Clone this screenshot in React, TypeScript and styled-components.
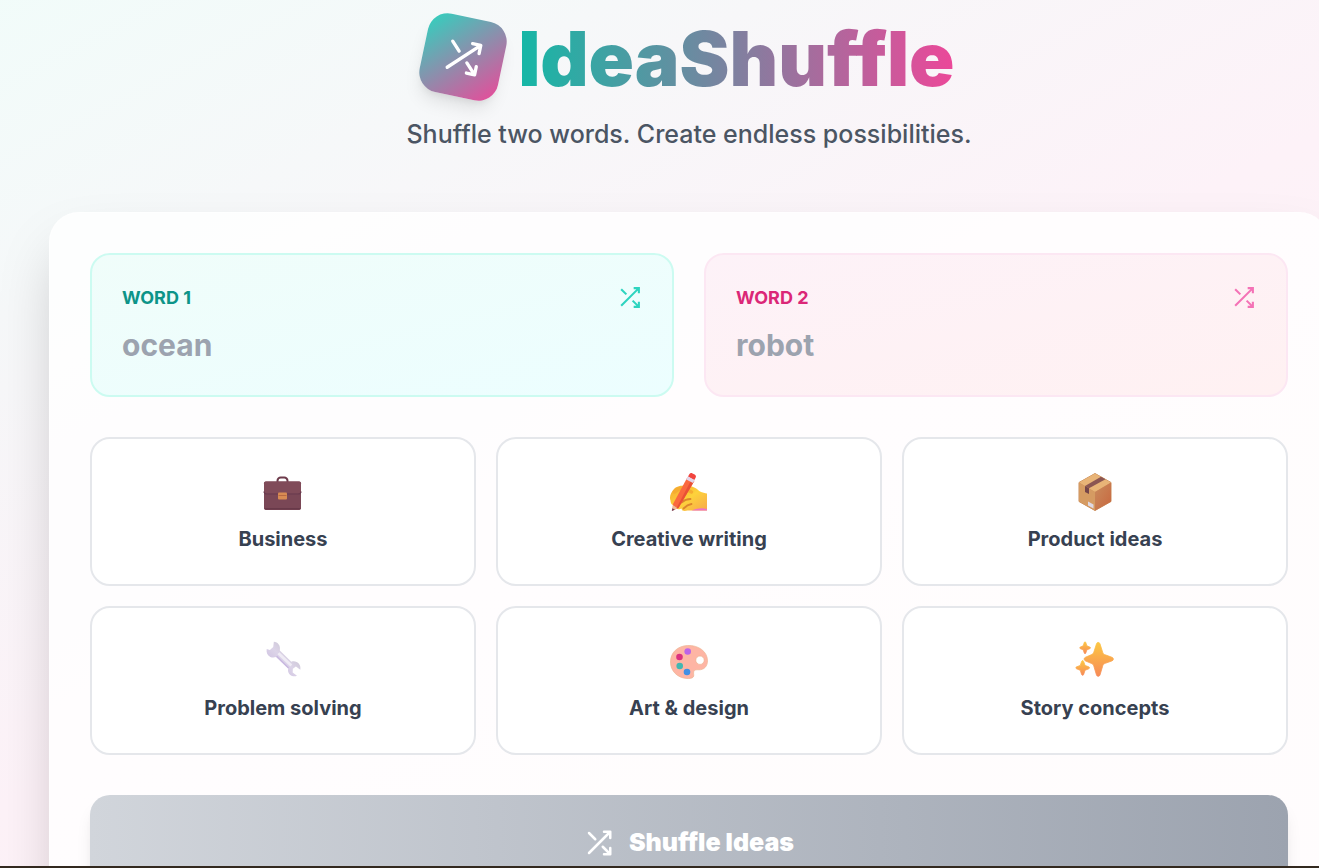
import React from "react";
import styled, { createGlobalStyle } from "styled-components";

const GlobalStyle = createGlobalStyle`
  *, *::before, *::after { box-sizing: border-box; }
  html { overflow-x: hidden; scrollbar-width: none; }
  body {
    margin: 0;
    font-family: Inter, "Liberation Sans", sans-serif;
    color: #374151;
  }
  button, input { font-family: inherit; }
`;

const Page = styled.div`
  width: max-content;
  min-width: 100%;
  min-height: 100vh;
  padding: 17px 49px 48px;
  background: linear-gradient(153deg, #f0fdfa -6%, #fdf2f8 48%, #fff1f2 100%);
`;

const Container = styled.main`
  width: 1280px;
  margin: 0 auto;
`;

const Header = styled.header`
  display: flex;
  flex-direction: column;
  align-items: center;
  gap: 20px;
  margin-bottom: 60px;
`;

const Brand = styled.div`
  display: flex;
  align-items: center;
  gap: 15px;
`;

const LogoTile = styled.div`
  display: grid;
  place-items: center;
  width: 80px;
  height: 80px;
  border-radius: 20px;
  color: #fff;
  background: linear-gradient(to bottom right, #2dd4bf, #ec4899);
  box-shadow: 0 12px 18px -4px rgba(0, 0, 0, 0.1), 0 5px 8px -5px rgba(0, 0, 0, 0.1);
  transform: rotate(12deg);
`;

const Title = styled.h1`
  margin: 0;
  padding-top: 4px;
  font-size: 75px;
  line-height: 76px;
  font-weight: 900;
  color: transparent;
  background: linear-gradient(to right, #14b8a6, #ec4899);
  background-clip: text;
  -webkit-background-clip: text;
`;

const Tagline = styled.p`
  margin: 0;
  font-size: 25px;
  line-height: 35px;
  font-weight: 500;
  color: #4b5563;
`;

const Panel = styled.section`
  display: flex;
  flex-direction: column;
  gap: 40px;
  padding: 40px;
  border: 1px solid rgba(255, 255, 255, 0.5);
  border-radius: 30px;
  background: rgba(255, 255, 255, 0.8);
  box-shadow: 0 31px 62px -15px rgba(0, 0, 0, 0.25);
`;

const Words = styled.div`
  display: grid;
  grid-template-columns: 1fr 1fr;
  gap: 30px;
`;

type Tone = "teal" | "pink";

const tones = {
  teal: { from: "#f0fdfa", to: "#ecfeff", border: "#ccfbf1", label: "#0d9488", icon: "#2dd4bf" },
  pink: { from: "#fdf2f8", to: "#fff1f2", border: "#fce7f3", label: "#db2777", icon: "#f472b6" },
};

const WordCard = styled.div<{ $tone: Tone }>`
  display: flex;
  flex-direction: column;
  gap: 15px;
  padding: 30px;
  border: 2px solid ${(p) => tones[p.$tone].border};
  border-radius: 20px;
  background: linear-gradient(to bottom right, ${(p) => tones[p.$tone].from}, ${(p) => tones[p.$tone].to});
`;

const WordHead = styled.div`
  display: flex;
  align-items: center;
  justify-content: space-between;
  height: 25px;
`;

const WordLabel = styled.label<{ $tone: Tone }>`
  font-size: 18px;
  line-height: 25px;
  font-weight: 700;
  color: ${(p) => tones[p.$tone].label};
`;

const IconButton = styled.button<{ $tone: Tone }>`
  display: flex;
  padding: 0;
  border: 0;
  background: none;
  color: ${(p) => tones[p.$tone].icon};
  cursor: pointer;
`;

const WordInput = styled.input`
  width: 100%;
  height: 40px;
  padding: 0;
  border: 0;
  outline: 0;
  background: transparent;
  font-size: 30px;
  line-height: 40px;
  font-weight: 700;
  color: #1f2937;

  &::placeholder { color: #9ca3af; opacity: 1; }
`;

const Topics = styled.div`
  display: grid;
  grid-template-columns: repeat(3, 1fr);
  gap: 20px;
`;

const Topic = styled.button`
  display: flex;
  flex-direction: column;
  align-items: center;
  gap: 10px;
  padding: 30px;
  border: 2px solid #e5e7eb;
  border-radius: 20px;
  background: #fff;
  color: #374151;
  font-size: 20px;
  line-height: 30px;
  font-weight: 700;
  cursor: pointer;
`;

const Picture = styled.svg`
  display: block;
  width: 45px;
  height: 45px;
`;

const ShuffleButton = styled.button`
  display: flex;
  align-items: center;
  justify-content: center;
  gap: 15px;
  padding: 30px;
  border: 0;
  border-radius: 20px;
  color: #fff;
  background: linear-gradient(to right, #d1d5db, #9ca3af);
  box-shadow: 0 12px 18px -4px rgba(0, 0, 0, 0.1), 0 5px 8px -5px rgba(0, 0, 0, 0.1);
  font-size: 25px;
  line-height: 35px;
  font-weight: 900;
`;

const BottomEdge = styled.div`
  position: fixed;
  inset: auto 0 0 0;
  height: 2px;
  background: #33291f;
`;

function ShuffleIcon({ size, stroke = 2, round = false }: { size: number; stroke?: number; round?: boolean }) {
  return (
    <svg
      width={size}
      height={size}
      viewBox="0 0 24 24"
      fill="none"
      stroke="currentColor"
      strokeWidth={stroke}
      strokeLinecap={round ? "round" : "butt"}
      strokeLinejoin={round ? "round" : "miter"}
      aria-hidden="true"
    >
      <path d="M16 3h5v5M4 20 21 3M21 16v5h-5M15 15l6 6M4 4l5 5" />
    </svg>
  );
}

function Briefcase() {
  return (
    <Picture viewBox="1 0 45 45" aria-hidden="true">
      <path d="M17.500 14v-2.300a3.200 3.200 0 0 1 3.200-3.200h3.600a3.200 3.200 0 0 1 3.200 3.200V14" fill="none" stroke="#6d3b4b" strokeWidth="2" />
      <rect x="4" y="12.500" width="37" height="28.500" rx="1.800" fill="#7a4756" />
      <path d="M4 14.300A1.800 1.800 0 0 1 5.800 12.500h33.400a1.800 1.800 0 0 1 1.800 1.800V22q0 2.500-2.500 2.500h-32Q4 24.500 4 22z" fill="#804b59" />
      <path d="M4 22.500q0 2.500 3 2.500h31q3 0 3-2.500" fill="none" stroke="#693a4e" strokeWidth="1.200" />
      <path d="M5 39.800h35" stroke="#683949" strokeWidth="1.600" />
      <rect x="18" y="23.500" width="9" height="7" rx="1" fill="#d88b53" />
      <path d="M18.500 26.500h8" stroke="#b96a42" strokeWidth="1" />
    </Picture>
  );
}

function WritingHand() {
  return (
    <Picture viewBox="1.500 -0.500 45 45" aria-hidden="true">
      <defs>
        <linearGradient id="hand" x1="0" y1="0" x2="1" y2="1">
          <stop offset="0" stopColor="#f5a52f" />
          <stop offset=".5" stopColor="#fdd23b" />
          <stop offset="1" stopColor="#f7a84b" />
        </linearGradient>
      </defs>
      <path d="M5 31c-1.500-4 .5-8 3.500-11.500 2.500-2.800 7-3.500 11.500-3.500 7-.2 11 3 14.500 6 2.500 1.300 5 1.700 7 2v17H22c-3 1-6 .5-6-2-3 2-6 0-5-3-3.500 1-6-1.500-6-5z" fill="url(#hand)" />
      <path d="M26 41q8-3.500 15.500-1.500V41z" fill="#ed72c4" />
      <path d="M16 33q4-3.500 9-3.500M18 39q4-4 8-4.500" fill="none" stroke="#dc852d" strokeWidth="1.800" strokeLinecap="round" />
      <path d="M9 22.500q5-5 11-3l6 3" fill="none" stroke="#f6ac30" strokeWidth="3.500" strokeLinecap="round" />
      <path d="m21.800 8 7 3.500L13 38.500 7 41l.5-6.500z" fill="#fa693e" />
      <path d="m26 10 2.800 1.500L13 38.500l-2.500 1z" fill="#e95036" />
      <path d="m22.500 7 1.300-2.200c.7-1.200 2-1.500 3.200-.9l2.200 1.100c1.300.7 1.600 2 .9 3.200l-1.400 2.600z" fill="#f1453f" />
      <path d="m20.700 10 1.600-3 6.900 3.500-1.700 3z" fill="#e2d4e8" />
      <path d="M7.300 35.500 12 38.800 6.600 41.200z" fill="#edbd9b" />
      <path d="m6.900 38.800 2.500 1.500-3.100 1.300z" fill="#6d3a55" />
    </Picture>
  );
}

function Parcel() {
  return (
    <Picture viewBox="0.500 -0.500 45 45" aria-hidden="true">
      <defs>
        <linearGradient id="parcelSide" x1="0" y1="0" x2="1" y2="1">
          <stop offset="0" stopColor="#c98c5d" />
          <stop offset="1" stopColor="#c8673f" />
        </linearGradient>
      </defs>
      <path d="m22.500 4 16 9v19l-16 9-16-9V13z" fill="#cc925d" stroke="#c98b59" strokeLinejoin="round" />
      <path d="m22.500 4 16 9-16 9.500-16-9.500z" fill="#e8b477" />
      <path d="M38.500 13v19l-16 9V22.500z" fill="url(#parcelSide)" />
      <path d="M6.500 13v19l16 9V22.500z" fill="#d59b62" />
      <path d="M12.500 16.500 28.500 7.200 33 9.700l-16.500 9.100z" fill="#8b5652" />
      <path d="m12.500 16.500 4 2.300v5.700l-4-2z" fill="#754549" />
      <path d="m15.500 32 5.500 3v4l-5.500-3z" fill="#ded9e4" />
    </Picture>
  );
}

function Wrench() {
  return (
    <Picture viewBox="-0.500 0.500 49 49" aria-hidden="true">
      <defs>
        <linearGradient id="steel" x1="0" y1="1" x2="1" y2="0">
          <stop offset="0" stopColor="#c5b4dc" />
          <stop offset=".5" stopColor="#dcd4e8" />
          <stop offset="1" stopColor="#bdbac3" />
        </linearGradient>
      </defs>
      <path
        d="m13.500 4.700-.7 5.600-3.600 3.400-3.500-1.200c-.6 3.700.7 7 3.900 8.600 2.200 1 4.500.8 6.300.2l13.200 12.500c-.8 3.800.9 6.900 4.300 8 2 .6 3.800.4 5.300-.2l-4.700-3.600.2-4 3.300-2.500 4.800 3.700c.8-3.700-.8-7.300-4.100-8.700-2-.8-4-.7-5.700-.1L20 14.100c1-5.400-2.100-8.900-6.500-9.400z"
        fill="url(#steel)"
      />
      <path d="m18.500 17 14 13.500" stroke="#efebf4" strokeWidth="3" />
      <path d="m16.500 20.500 13 12.700" stroke="#c8b8e0" strokeWidth="1.500" />
    </Picture>
  );
}

function Palette() {
  return (
    <Picture viewBox="0.500 -1 45 45" aria-hidden="true">
      <path
        fillRule="evenodd"
        d="M21 6.500C11 7 4 13.500 4 23c0 9 7 16 16.500 16.500 2.500.2 5-.3 6-1.200 1.700-1.500 0-3.600.8-5.800.7-1.800 2.600-1.800 5-1.700 5.500.2 8.700-3.800 8.700-9C41 12.500 32 6 21 6.500zM33.500 17a4.200 4.200 0 1 1 0 8.400 4.200 4.200 0 0 1 0-8.400z"
        fill="#feb5a4"
        stroke="#edb391"
        strokeWidth=".7"
      />
      <circle cx="21.200" cy="12.500" r="3.300" fill="#bd63e8" />
      <circle cx="13" cy="18" r="3.300" fill="#dc3280" />
      <circle cx="13.200" cy="27" r="3.300" fill="#43b7b1" />
      <circle cx="20.500" cy="33" r="3.300" fill="#4290e5" />
    </Picture>
  );
}

function Sparkles() {
  return (
    <Picture viewBox="0.500 0.500 46 46" aria-hidden="true">
      <defs>
        <linearGradient id="spark" x1="0" y1="0" x2="0" y2="1">
          <stop offset="0" stopColor="#fcc743" />
          <stop offset="1" stopColor="#f78a57" />
        </linearGradient>
      </defs>
      <g fill="url(#spark)" stroke="url(#spark)" strokeWidth=".8" strokeLinejoin="round">
        <path d="M24.500 6.500c.5-2 3-2 3.600 0l2.700 8.500c.5 1.500 1.200 2.200 2.700 2.700l6.800 2.500c2 .8 2 3 0 3.700l-6.800 2.500c-1.500.6-2.300 1.300-2.700 2.900l-2.700 9c-.6 1.900-3 1.900-3.600 0l-2.700-9c-.5-1.600-1.300-2.300-2.800-2.900l-5.800-2.500c-1.800-.7-1.800-3 0-3.700l5.800-2.500c1.500-.6 2.300-1.300 2.800-2.800z" />
        <path d="M12 5.200c.3-1 1.300-1 1.600 0l1.100 3.300 3 1.300c.9.400.9 1.200 0 1.600l-3 1.200-1.100 3.200c-.3 1-1.300 1-1.600 0L10.900 12.600 8 11.400c-.8-.4-.8-1.200 0-1.600l2.900-1.300z" />
        <path d="M9.300 24.500c.4-1.200 1.700-1.200 2.100 0l1.400 4 3.800 1.500c1.100.4 1.100 1.500 0 2l-3.800 1.500-1.400 4.200c-.4 1.200-1.700 1.200-2.100 0l-1.400-4.200L4.200 32c-1.100-.5-1.100-1.600 0-2l3.700-1.500z" />
      </g>
    </Picture>
  );
}

const words: { id: string; label: string; example: string; tone: Tone }[] = [
  { id: "word-1", label: "WORD 1", example: "ocean", tone: "teal" },
  { id: "word-2", label: "WORD 2", example: "robot", tone: "pink" },
];

const topics = [
  { name: "Business", Art: Briefcase },
  { name: "Creative writing", Art: WritingHand },
  { name: "Product ideas", Art: Parcel },
  { name: "Problem solving", Art: Wrench },
  { name: "Art & design", Art: Palette },
  { name: "Story concepts", Art: Sparkles },
];

export default function App() {
  return (
    <>
      <GlobalStyle />
      <Page>
        <Container>
          <Header>
            <Brand>
              <LogoTile>
                <ShuffleIcon size={40} stroke={2} round />
              </LogoTile>
              <Title>IdeaShuffle</Title>
            </Brand>
            <Tagline>Shuffle two words. Create endless possibilities.</Tagline>
          </Header>
          <Panel>
            <Words>
              {words.map((w) => (
                <WordCard key={w.id} $tone={w.tone}>
                  <WordHead>
                    <WordLabel htmlFor={w.id} $tone={w.tone}>{w.label}</WordLabel>
                    <IconButton type="button" $tone={w.tone} aria-label={`Shuffle ${w.label}`}>
                      <ShuffleIcon size={25} />
                    </IconButton>
                  </WordHead>
                  <WordInput id={w.id} type="text" placeholder={w.example} />
                </WordCard>
              ))}
            </Words>
            <Topics>
              {topics.map(({ name, Art }) => (
                <Topic key={name} type="button">
                  <Art />
                  {name}
                </Topic>
              ))}
            </Topics>
            <ShuffleButton type="button">
              <ShuffleIcon size={30} round />
              Shuffle Ideas
            </ShuffleButton>
          </Panel>
        </Container>
      </Page>
      <BottomEdge />
    </>
  );
}
